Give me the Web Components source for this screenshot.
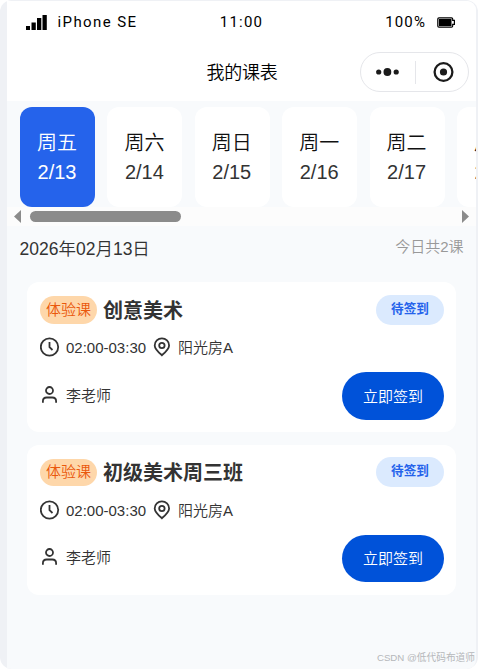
<!DOCTYPE html>
<html lang="zh-CN"><head><meta charset="utf-8"><title>我的课表</title>
<style>
html,body{margin:0;background:#fff}
body{width:478px;height:669px;overflow:hidden;font-family:"Liberation Sans","Noto Sans CJK SC",sans-serif;font-weight:350;color:#333}
</style></head><body>
<schedule-app></schedule-app>
<script>
const define=(name,html,init)=>customElements.define(name,class extends HTMLElement{
  constructor(){super();const t=document.createElement('template');t.innerHTML=html;
    this.attachShadow({mode:'open'}).appendChild(t.content.cloneNode(true));}
  connectedCallback(){if(init)init(this,this.shadowRoot);}
});

define('status-bar',`<style>
:host{display:grid;grid-template-columns:1fr auto 1fr;align-items:center;height:42px;padding:0 20px 0 19px;box-sizing:border-box;font:15px/20px Roboto,sans-serif;letter-spacing:1.4px;color:#000}
.l,.r{display:flex;align-items:center}.r{justify-content:flex-end;letter-spacing:1.1px}
.l svg{margin-right:10.500px}.r svg{margin-left:11px}.t{letter-spacing:1.2px;padding-left:1px}
</style><div class="l"><svg width="21" height="15" viewBox="0 0 21 15"><path d="M0 11h4v4H0zM5.500 7.500h4.300v7.500h-4.300zM11 3h4.300v12h-4.300zM16.500 0h4.300v15h-4.300z"/></svg><span>iPhone SE</span></div>
<span class="t">11:00</span>
<div class="r"><span>100%</span><svg width="19" height="11" viewBox="0 0 19 11"><path fill="none" stroke="#000" stroke-width="1.2" d="M2 .8h12.500q1.200 0 1.200 1.200v1.300h1.700v4h-1.700V9q0 1.200-1.200 1.200H2Q.8 10.200.8 9V2Q.8.8 2 .8z"/><path d="M1.900 2h12.600v7H1.900z"/></svg></div>`);

define('nav-capsule',`<style>
:host{display:flex;align-items:center;width:109px;height:40px;box-sizing:border-box;border:1px solid #e5e6ea;border-radius:20px;background:#fff}
.h{flex:none;width:54px;display:flex;justify-content:center}.h+.s+.h{width:54px}.s{flex:none;width:1px;height:23px;background:#e5e6ea}
svg{flex:none}
</style><div class="h"><svg width="24" height="10" viewBox="0 0 24 10" fill="#1b1b1b"><circle cx="2.700" cy="5" r="2.600"/><circle cx="11.400" cy="5" r="3.900"/><circle cx="20.200" cy="5" r="2.600"/></svg></div><div class="s"></div><div class="h"><svg width="22" height="22" viewBox="0 0 22 22"><circle cx="11.500" cy="11" r="8.900" fill="none" stroke="#1b1b1b" stroke-width="2.300"/><circle cx="11.500" cy="11" r="3.600" fill="#1b1b1b"/></svg></div>`);

define('nav-bar',`<style>
:host{display:grid;grid-template-columns:1fr auto 1fr;align-items:center;height:58px;padding:0 7px 0 8px}
.t{font-size:18px;line-height:26px;padding-top:2px;letter-spacing:-.2px;color:#000}nav-capsule{justify-self:end}
</style><span></span><span class="t"><slot></slot></span><nav-capsule></nav-capsule>`);

define('day-card',`<style>
:host{display:flex;flex-direction:column;align-items:center;justify-content:center;flex:none;width:75px;height:100px;border-radius:12px;background:#fff;font-size:20px;line-height:30px;color:#333}
span{margin-left:-1px}.w{color:#111;line-height:32px;margin-bottom:-2px}:host([active]){background:#2563eb;color:#fff}:host([active]) .w{color:#fff}
</style><span class="w"><slot name="week"></slot></span><span><slot></slot></span>`);

define('date-strip',`<style>
:host{display:block;height:125px;padding-top:6px;box-sizing:border-box;overflow:hidden}
.d{display:flex;gap:12.400px;padding-left:13px;overflow:hidden}
.bar{display:flex;align-items:center;justify-content:space-between;height:19px;padding:0 7px;background:#fcfcfc}
.track{flex:1;padding:0 9px}.thumb{width:151px;height:11px;border-radius:6px;background:#8b8b8b}
svg{display:block}
</style><div class="d"><slot></slot></div><div class="bar"><svg width="7" height="13" fill="#8b8b8b"><path d="M7 0v13L0 6.500z"/></svg><div class="track"><div class="thumb"></div></div><svg width="7" height="13" fill="#8b8b8b"><path d="M0 0v13l7-6.500z"/></svg></div>`);

define('day-summary',`<style>
:host{display:flex;justify-content:space-between;height:56px;padding:0 12.500px 0 12.500px;box-sizing:border-box}
.a{font-size:17.500px;line-height:24px;margin-top:11px}.b{font-size:15px;line-height:20px;margin-top:11px;color:#999}
</style><span class="a"><slot name="date"></slot></span><span class="b"><slot></slot></span>`);

const paths={
 clock:'<circle cx="9.500" cy="10" r="8.700"/><path d="M9.500 5v5.200l3 2.800"/>',
 pin:'<path d="M9.900 18.200C6.800 15.500 2.700 12 2.700 8.400a7.200 7 0 0 1 14.400 0c0 3.600-4.100 7.100-7.200 9.800z"/><circle cx="9.900" cy="8.500" r="2.700"/>',
 user:'<circle cx="9.500" cy="5.500" r="3.500"/><path d="M2.900 17.800v-1.600q0-3.700 3.800-3.700h5.600q3.800 0 3.800 3.700v1.600"/>'};
define('line-icon',`<style>:host{display:block;width:20px;height:20px;flex:none}svg{display:block}</style><svg width="20" height="20" viewBox="0 0 20 20" fill="none" stroke="#333" stroke-width="1.800"></svg>`,
 (h,r)=>{r.querySelector('svg').innerHTML=paths[h.getAttribute('name')];});

define('status-pill',`<style>
:host{display:block;width:68px;height:30px;border-radius:15px;background:#dbeafe;color:#2563eb;font-size:12.600px;font-weight:700;line-height:28px;text-align:center}
</style><slot></slot>`);
define('sign-button',`<style>
:host{display:block}button{display:block;width:102px;height:var(--button-height,48px);border:0;padding:0;border-radius:24px;background:#0052d9;color:#fff;font:350 15px/47px "Liberation Sans","Noto Sans CJK SC",sans-serif}
</style><button><slot></slot></button>`);

define('lesson-card',`<style>
:host{display:block;height:150px;box-sizing:border-box;padding:13px 12px 0 13px;border-radius:12px;background:#fff;font-size:15px}
:host([compact]){--button-height:47px;padding-top:12px}
.row{display:flex;align-items:center}.top{height:30px}
.tag{width:57px;height:28px;border-radius:14px;background:#fed7aa;color:#ea580c;line-height:28px;text-align:center}
:host([compact]) .tag{height:27px;line-height:26px}
h2{flex:1;margin:0 0 0 6px;font-size:20px;line-height:30px;padding-top:2px;font-weight:700}
.meta{height:20px;margin-top:12px;line-height:20px}
:host([compact]) .meta{margin-top:13px}
.meta span{margin-left:6px;padding-top:1px}.meta .time{margin-right:6px}
.foot{height:48px;margin-top:15px;justify-content:space-between;align-items:flex-start}
.who{display:flex;gap:6px;line-height:22px;margin-top:13px}
:host([compact]) .who{margin-top:12px}
</style><div class="row top"><div class="tag">体验课</div><h2><slot></slot></h2><status-pill>待签到</status-pill></div>
<div class="row meta"><line-icon name="clock"></line-icon><span class="time">02:00-03:30</span><line-icon name="pin"></line-icon><span>阳光房A</span></div>
<div class="row foot"><div class="who"><line-icon name="user"></line-icon><span>李老师</span></div><sign-button>立即签到</sign-button></div>`);

define('schedule-app',`<style>
:host{display:block;width:478px;height:669px;box-sizing:border-box;padding:1px 2px 0 7px;border-radius:12px;background:#eff1f5;overflow:hidden;position:relative}
main{height:668px;background:#f8fafc;border-radius:0 9px 9px 0;overflow:hidden}
header{height:100px;background:#fff}
.list{display:grid;gap:13px;padding:0 20px}
.mark{position:absolute;right:3px;bottom:3px;font-size:9.700px;line-height:16px;font-weight:400;color:#b5b7ba;white-space:nowrap}
</style><main><header><status-bar></status-bar><nav-bar>我的课表</nav-bar></header>
<date-strip><day-card active><span slot="week">周五</span>2/13</day-card><day-card><span slot="week">周六</span>2/14</day-card><day-card><span slot="week">周日</span>2/15</day-card><day-card><span slot="week">周一</span>2/16</day-card><day-card><span slot="week">周二</span>2/17</day-card><day-card><span slot="week">周三</span>2/18</day-card></date-strip>
<day-summary><span slot="date">2026年02月13日</span>今日共2课</day-summary>
<div class="list"><lesson-card>创意美术</lesson-card><lesson-card compact>初级美术周三班</lesson-card></div></main><span class="mark">CSDN @低代码布道师</span>`);
</script></body></html>
